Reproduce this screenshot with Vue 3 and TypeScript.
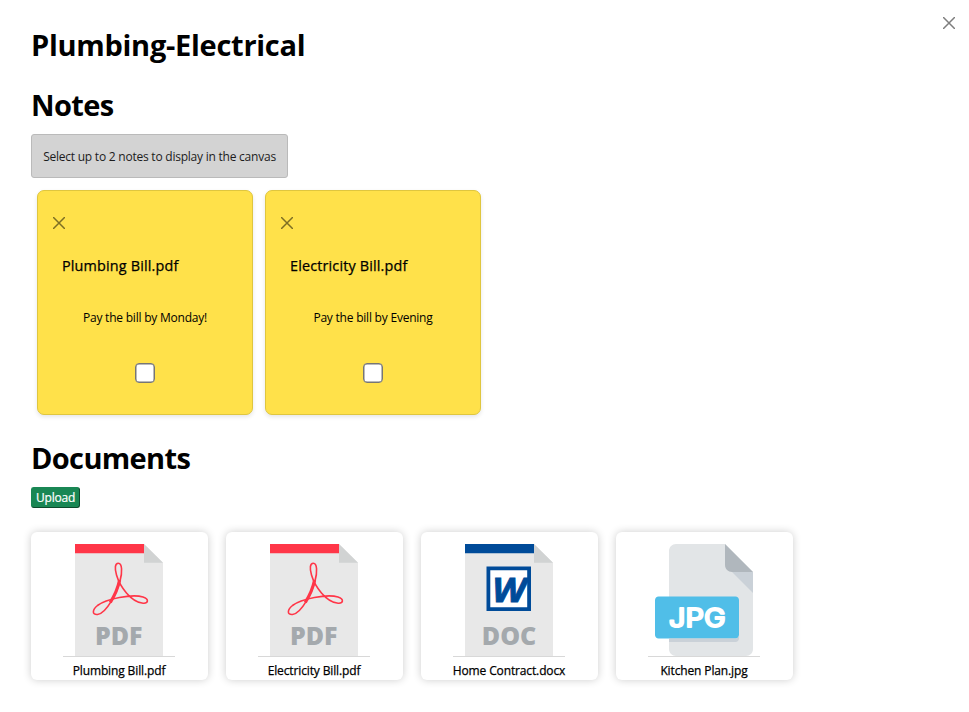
<script setup lang="ts">
import { ref } from 'vue'

interface Note {
  id: number
  title: string
  body: string
  selected: boolean
}

interface Doc {
  id: number
  name: string
  kind: 'pdf' | 'doc' | 'jpg'
}

const notes = ref<Note[]>([
  { id: 1, title: 'Plumbing Bill.pdf', body: 'Pay the bill by Monday!', selected: false },
  { id: 2, title: 'Electricity Bill.pdf', body: 'Pay the bill by Evening', selected: false },
])

const docs: Doc[] = [
  { id: 1, name: 'Plumbing Bill.pdf', kind: 'pdf' },
  { id: 2, name: 'Electricity Bill.pdf', kind: 'pdf' },
  { id: 3, name: 'Home Contract.docx', kind: 'doc' },
  { id: 4, name: 'Kitchen Plan.jpg', kind: 'jpg' },
]

function removeNote(id: number) {
  notes.value = notes.value.filter((n) => n.id !== id)
}
</script>

<template>
  <main class="panel">
    <button class="close panel-close" aria-label="Close">
      <svg viewBox="0 0 12 12"><path d="M.5 .5 11.5 11.5M11.5 .5 .5 11.5" /></svg>
    </button>

    <h1 class="heading title">Plumbing-Electrical</h1>
    <h2 class="heading notes-heading">Notes</h2>
    <p class="hint"><span>Select up to 2 notes to display in the canvas</span></p>

    <section class="notes">
      <article v-for="note in notes" :key="note.id" class="note">
        <button class="close" aria-label="Remove" @click="removeNote(note.id)">
          <svg viewBox="0 0 12 12"><path d="M.5 .5 11.5 11.5M11.5 .5 .5 11.5" /></svg>
        </button>
        <h3 class="note-title">{{ note.title }}</h3>
        <p class="note-body">{{ note.body }}</p>
        <input v-model="note.selected" class="check" type="checkbox" />
      </article>
    </section>

    <h2 class="heading docs-heading">Documents</h2>
    <button class="upload">Upload</button>

    <section class="docs">
      <article v-for="doc in docs" :key="doc.id" class="doc">
        <div class="thumb">
          <svg v-if="doc.kind === 'jpg'" viewBox="0 0 512 512">
            <path fill="#e2e5e7" d="M128 0c-17.6 0-32 14.4-32 32v448c0 17.6 14.4 32 32 32h320c17.6 0 32-14.4 32-32V128L352 0z" />
            <path fill="#b0b7bd" d="M384 128h96L352 0v96c0 17.6 14.4 32 32 32z" />
            <path fill="#cad1d8" d="M480 224 384 128h96z" />
            <path fill="#50bee8" d="M416 416c0 8.800-7.200 16-16 16H48c-8.800 0-16-7.200-16-16V256c0-8.800 7.200-16 16-16h352c8.800 0 16 7.200 16 16z" />
            <path fill="#cad1d8" d="M400 432H96v16h304c8.800 0 16-7.200 16-16v-16c0 8.800-7.200 16-16 16z" />
            <text class="jpg-label" x="96" y="381" textLength="258" lengthAdjust="spacingAndGlyphs">JPG</text>
          </svg>
          <svg v-else viewBox="0 0 112 112">
            <path fill="#e8e8e8" d="M12 0h69l19 18.700V112H12z" />
            <path fill="#d1d3d3" d="M81 0v18.700h19z" />
            <template v-if="doc.kind === 'pdf'">
              <path fill="#ff3648" d="M12 0h69v9.300H12z" />
              <path class="acrobat" d="M55.300 19.300C59.200 19.300 59.500 28 57 37 54 48 44 69 34.500 70.500 29 71 29 66 34.500 61.500 43 55 69 49.500 80 53 86.500 55.200 85.500 60 79 59 68 57.500 57 43 53.500 31 51.500 24 52 19.300 55.300 19.300z" />
              <path class="acrobat-stem" d="M56.600 36C55 44 51 52.500 47.300 58.500" />
              <text class="type-label" x="32" y="101.200" textLength="47.500" lengthAdjust="spacingAndGlyphs">PDF</text>
            </template>
            <template v-else>
              <path fill="#004b99" d="M12 0h69v9.300H12z" />
              <path fill="#fff" stroke="#004b99" stroke-width="3.800" d="M35.400 24.400h40.700v40.700H35.400z" />
              <text class="word-mark" x="39" y="58" textLength="34" lengthAdjust="spacingAndGlyphs">W</text>
              <text class="type-label" x="28.800" y="101.200" textLength="54.500" lengthAdjust="spacingAndGlyphs">DOC</text>
            </template>
          </svg>
        </div>
        <span class="doc-name">{{ doc.name }}</span>
      </article>
    </section>
  </main>
</template>

<style>
body {
  background: #fff;
}
</style>

<style scoped>
.panel {
  position: relative;
  box-sizing: border-box;
  height: 712px;
  padding: 25px 31px 0;
  color: #000;
  font-family: 'Open Sans', 'Noto Sans', sans-serif;
}
.heading {
  margin: 0;
  font-size: 29px;
  font-weight: 700;
  line-height: 40px;
  letter-spacing: -0.65px;
}
.title {
  letter-spacing: -0.28px;
}
.notes-heading {
  margin-top: 20px;
}
.docs-heading {
  margin-top: 23px;
}
.close {
  display: block;
  width: 12px;
  height: 12px;
  padding: 0;
  border: 0;
  background: none;
  opacity: 0.5;
}
.close svg {
  display: block;
  width: 12px;
  height: 12px;
  fill: none;
  stroke: #000;
  stroke-width: 1.5;
  stroke-linecap: round;
}
.panel-close {
  position: absolute;
  top: 17px;
  right: 14px;
}
.hint {
  display: flex;
  align-items: center;
  justify-content: center;
  box-sizing: border-box;
  width: 257px;
  height: 44px;
  margin: 9px 0 12px;
  border: 1px solid #bababa;
  border-radius: 3px;
  background: #d3d3d3;
  color: #1c1c1c;
  font-size: 12px;
  letter-spacing: -0.23px;
  white-space: nowrap;
}
.notes {
  display: flex;
  gap: 12px;
  padding-left: 6px;
}
.note {
  display: flex;
  flex-direction: column;
  box-sizing: border-box;
  width: 216px;
  height: 225px;
  padding: 26px 15px 0;
  border: 1px solid #dfc63f;
  border-radius: 7px;
  background: #ffe14a;
  box-shadow: 0 2px 4px rgba(0, 0, 0, 0.1);
}
.note-title {
  margin: 26px 0 0 9px;
  font-size: 14.4px;
  font-weight: 500;
  line-height: 22px;
  letter-spacing: 0.16px;
  white-space: nowrap;
  -webkit-text-stroke: 0.25px #000;
}
.note-body {
  margin: 32px 0 0;
  font-size: 12px;
  line-height: 18px;
  letter-spacing: -0.22px;
  text-align: center;
}
.check {
  appearance: none;
  align-self: center;
  box-sizing: border-box;
  width: 20px;
  height: 20px;
  margin: 36px 0 0;
  border: 1.5px solid #767676;
  box-shadow: inset 0 0 0 0.5px #767676;
  border-radius: 4px;
  background: #fff;
}
.check:checked {
  background: #0075ff;
}
.upload {
  display: block;
  box-sizing: border-box;
  width: 49px;
  height: 21px;
  margin-top: 9px;
  padding: 0;
  border: 1px solid;
  border-color: #198754 #0d4a2d #0d4a2d #198754;
  border-radius: 3px;
  background: #198754;
  color: #fff;
  font: 500 12px/18px 'Open Sans', sans-serif;
  letter-spacing: -0.22px;
  -webkit-text-stroke: 0.2px #fff;
}
.docs {
  display: flex;
  gap: 18px;
  margin-top: 24px;
}
.doc {
  display: flex;
  flex-direction: column;
  align-items: center;
  box-sizing: border-box;
  width: 177px;
  height: 148px;
  padding: 12px 1px 0 0;
  border-radius: 6px;
  background: #fff;
  box-shadow: 0 0 8px rgba(0, 0, 0, 0.2);
}
.thumb {
  width: 112px;
  height: 112px;
  border-bottom: 1px solid #d8d8d8;
}
.thumb svg {
  display: block;
  width: 112px;
  height: 112px;
}
.doc-name {
  margin-top: 5px;
  font-size: 12px;
  font-weight: 500;
  line-height: 18px;
  letter-spacing: -0.13px;
  white-space: nowrap;
  -webkit-text-stroke: 0.25px #000;
}
.acrobat {
  fill: none;
  stroke: #ff3648;
  stroke-width: 1.6;
}
.acrobat-stem {
  fill: none;
  stroke: #ff3648;
  stroke-width: 3.2;
}
.type-label {
  fill: #a4a9ad;
  font-size: 24.5px;
  font-weight: 800;
}
.word-mark {
  fill: #004b99;
  stroke: #004b99;
  stroke-width: 0.8;
  font-size: 34.5px;
  font-weight: 700;
  font-style: italic;
}
.jpg-label {
  fill: #fff;
  stroke: #fff;
  stroke-width: 9;
  stroke-linejoin: round;
  font-family: Inter, sans-serif;
  font-size: 114px;
  font-weight: 400;
}
</style>
